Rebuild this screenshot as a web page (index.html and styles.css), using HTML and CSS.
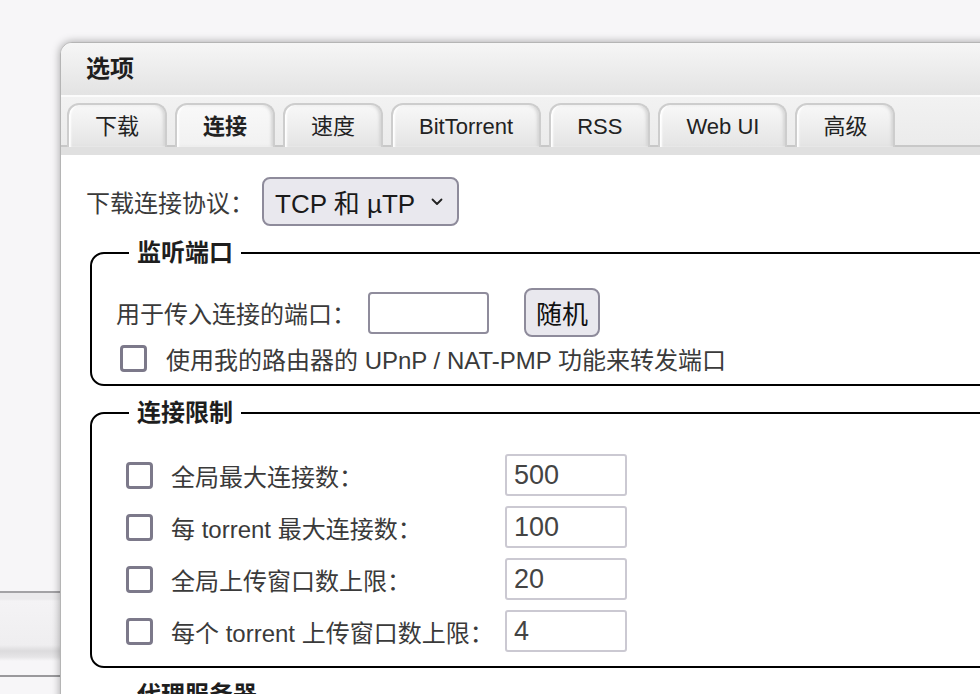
FILE: index.html
```html
<!DOCTYPE html>
<html lang="zh-CN">
<head>
    <meta charset="UTF-8">
    <title>选项</title>
    <link rel="stylesheet" href="styles.css">
</head>
<body>
<div class="backdrop">
    <div class="toolbar"></div>
</div>

<div class="window">
    <div class="titlebar">选项</div>

    <div class="tabbar">
        <ul class="tabs">
            <li class="tab">下载</li>
            <li class="tab active">连接</li>
            <li class="tab">速度</li>
            <li class="tab">BitTorrent</li>
            <li class="tab">RSS</li>
            <li class="tab">Web UI</li>
            <li class="tab">高级</li>
        </ul>
    </div>

    <div class="content">
        <div class="proto-row">
            <label for="proto">下载连接协议：</label>
            <div class="select" id="proto">
                <span>TCP 和 µTP</span>
                <svg width="12" height="8" viewBox="0 0 12 8"><path d="M1.5 1.5 L6 6 L10.5 1.5" fill="none" stroke="#222" stroke-width="1.8" stroke-linecap="round" stroke-linejoin="round"/></svg>
            </div>
        </div>

        <fieldset class="group">
            <legend>监听端口</legend>
            <div class="port-row">
                <label for="port">用于传入连接的端口：</label>
                <input type="text" id="port" class="port-input">
                <button type="button" class="btn">随机</button>
            </div>
            <div class="check-row">
                <input type="checkbox" id="upnp" class="check">
                <label for="upnp">使用我的路由器的 UPnP / NAT-PMP 功能来转发端口</label>
            </div>
        </fieldset>

        <fieldset class="group limits">
            <legend>连接限制</legend>
            <div class="limit-grid">
                <input type="checkbox" class="check">
                <label>全局最大连接数：</label>
                <input type="text" class="num" value="500">

                <input type="checkbox" class="check">
                <label>每 torrent 最大连接数：</label>
                <input type="text" class="num" value="100">

                <input type="checkbox" class="check">
                <label>全局上传窗口数上限：</label>
                <input type="text" class="num" value="20">

                <input type="checkbox" class="check">
                <label>每个 torrent 上传窗口数上限：</label>
                <input type="text" class="num" value="4">
            </div>
        </fieldset>

        <fieldset class="group">
            <legend>代理服务器</legend>
        </fieldset>
    </div>
</div>
</body>
</html>
```

FILE: styles.css
```css
* {
    margin: 0;
    padding: 0;
    box-sizing: border-box;
}

body {
    background: #f7f6f8;
    width: 980px;
    height: 694px;
    overflow: hidden;
    font-family: "Liberation Sans", "Noto Sans CJK SC", sans-serif;
    color: #3a3a3a;
}

.backdrop {
    position: absolute;
    left: 0;
    top: 0;
    width: 980px;
    height: 694px;
}

.toolbar {
    position: absolute;
    left: 0;
    top: 591px;
    width: 200px;
    height: 86px;
    border-top: 2px solid #a3a2a5;
    border-bottom: 2px solid #9a999c;
    background: linear-gradient(#ebeaec 0, #ebeaec 6px, #f4f3f5 8px, #efeef0 52px, #dcdbdd 58px, #e6e5e7 64px, #f7f6f8 68px);
}

.window {
    position: absolute;
    left: 60px;
    top: 42px;
    width: 960px;
    height: 700px;
    background: #fff;
    border: 1px solid #b5b5b5;
    border-radius: 12px 12px 0 0;
    box-shadow: 0 0 9px rgba(0, 0, 0, 0.35);
    overflow: hidden;
}

.titlebar {
    height: 52px;
    padding-left: 25px;
    line-height: 52px;
    font-size: 24px;
    font-weight: bold;
    color: #1e1e1e;
    background: linear-gradient(#f6f6f6, #e3e3e3);
}

.tabbar {
    border-top: 2px solid #fbfbfb;
    padding: 6px 0 0 6px;
    background: linear-gradient(#f2f2f2, #ebebeb);
    border-bottom: 8px solid #e0e0e0;
    box-shadow: inset 0 -9px 0 -7px #c8c8c8;
}

.tabs {
    list-style: none;
    display: flex;
    gap: 8px;
}

.tab {
    height: 44px;
    padding: 0 26px;
    line-height: 44px;
    font-size: 22px;
    color: #222;
    border: 2px solid #cdcdcd;
    border-bottom: none;
    border-radius: 12px 12px 0 0;
    background: linear-gradient(#f8f8f8, #e4e4e4);
    box-shadow: inset 2px 0 2px #fff, inset -2px 0 3px #d6d6d6;
}

.tab.active {
    font-weight: bold;
    background: linear-gradient(#f9f9f9, #f1f1f1);
}

.content {
    padding: 22px 0 0 25px;
}

.proto-row {
    display: flex;
    align-items: center;
    height: 49px;
    font-size: 24px;
}

.proto-row label {
    margin-right: 8px;
}

.select {
    display: flex;
    align-items: center;
    width: 197px;
    height: 49px;
    padding: 0 14px 0 11px;
    justify-content: space-between;
    font-size: 26px;
    color: #1a1a1a;
    background: #e9e8ee;
    border: 2px solid #8e8b9b;
    border-radius: 8px;
}

.group {
    margin: 12px 0 0 4px;
    padding: 20px 24px 11px;
    border: 2px solid #000;
    border-radius: 14px;
    font-size: 24px;
}

.group legend {
    margin-left: 13px;
    padding: 0 8px;
    line-height: 30px;
    font-weight: bold;
    color: #1e1e1e;
}

.port-row {
    display: flex;
    align-items: center;
    height: 49px;
}

.port-input {
    width: 121px;
    height: 42px;
    margin-left: 12px;
    border: 2px solid #8f8c9c;
    border-radius: 4px;
    background: #fff;
    font-size: 24px;
}

.btn {
    width: 76px;
    height: 49px;
    margin-left: 35px;
    font-family: inherit;
    font-size: 26px;
    color: #111;
    background: #e9e8ee;
    border: 2px solid #8e8b9b;
    border-radius: 8px;
}

.check-row {
    display: flex;
    align-items: center;
    height: 30px;
    margin-top: 6px;
}

.check {
    appearance: none;
    width: 27px;
    height: 27px;
    margin: 0 19px 0 4px;
    border: 3px solid #7c798a;
    border-radius: 4px;
    background: #fff;
}

.limits {
    padding: 26px 24px 14px;
}

.limit-grid {
    display: grid;
    grid-template-columns: 55px 334px 122px;
    grid-auto-rows: 42px;
    row-gap: 10px;
    align-items: center;
}

.limit-grid .check {
    margin: 0 0 0 10px;
}

.num {
    width: 122px;
    height: 42px;
    padding-left: 7px;
    font-family: inherit;
    font-size: 27px;
    color: #444;
    border: 2px solid #cbc9d2;
    border-radius: 3px;
    background: #fff;
}
```
